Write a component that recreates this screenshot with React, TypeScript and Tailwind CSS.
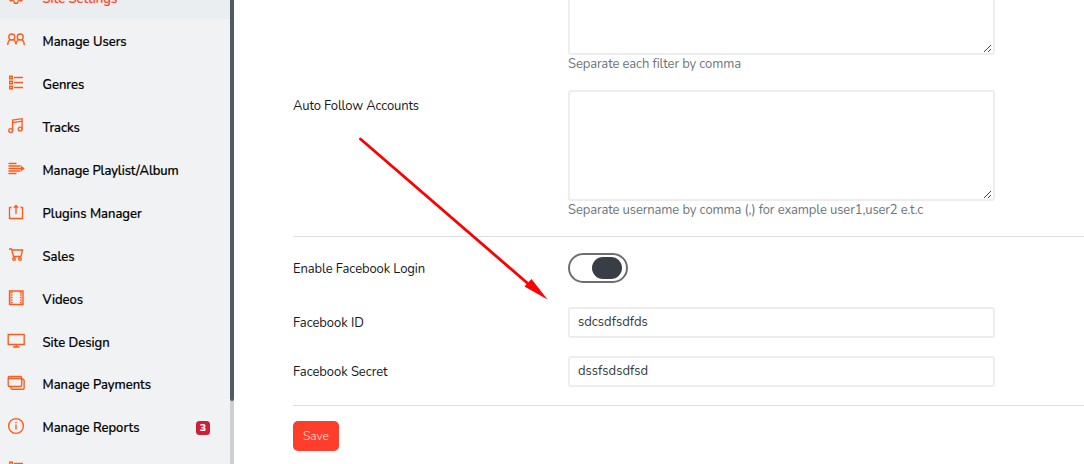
import type { ReactNode } from 'react';

type Item = { label: string; icon: ReactNode; tracking?: string; height: string; badge?: string };

const listIcon = (
  <g>
    <path d="M2.700 2.200h2.600v2.600h-2.600zM2.700 7.200h2.600v2.600h-2.600zM2.700 12.200h2.600v2.600h-2.600z" strokeWidth="1.4" />
    <path d="M7 3.500h9M7 8.500h9M7 13.500h9" strokeWidth="1.4" />
  </g>
);

const items: Item[] = [
  {
    label: 'Manage Users',
    height: 'h-[43px]',
    icon: (
      <g>
        <circle cx="4.800" cy="6" r="3" />
        <circle cx="13.200" cy="6" r="3" />
        <path d="M.7 14c0-3 1-4.400 2.600-5.500M6.500 8.500C8 9.600 9 11 9 13.500c0-2.500 1-3.900 2.500-5M14.700 8.500c1.600 1.100 2.600 2.500 2.600 5.500" />
      </g>
    ),
  },
  { label: 'Genres', height: 'h-[43px]', icon: listIcon },
  {
    label: 'Tracks',
    height: 'h-[43px]',
    icon: (
      <g>
        <circle cx="3.700" cy="13.500" r="1.900" />
        <circle cx="13.200" cy="12" r="1.900" />
        <path d="M5.600 13.500V3.200l9.500-1.500V12M5.600 5.700l9.500-1.500" />
      </g>
    ),
  },
  {
    label: 'Manage Playlist/Album',
    tracking: 'tracking-[-0.08px]',
    height: 'h-[43px]',
    icon: (
      <g>
        <path d="M1.500 3.500h8M1.500 6h12M1.500 8.500h13M1.500 11h12M1.500 13.500h8" />
        <path d="M14 5.500 17.700 8.500 14 11.500z" fill="currentColor" stroke="none" />
      </g>
    ),
  },
  {
    label: 'Plugins Manager',
    height: 'h-[43px]',
    icon: <path d="M4.500 4.500h-2v11h13v-11h-2M9 11V2.500M6.800 4.700 9 2.500l2.200 2.200" />,
  },
  {
    label: 'Sales',
    height: 'h-[43px]',
    icon: (
      <g>
        <path d="M2 3h2.500l2 7.500h7.500l1.500-6.500H5" />
        <circle cx="7" cy="13" r="1.300" />
        <circle cx="13" cy="13" r="1.300" />
      </g>
    ),
  },
  {
    label: 'Videos',
    height: 'h-[43px]',
    icon: (
      <g>
        <path d="M2.500 2h13.500v13.500h-13.500z" />
        <path d="M4 2.500v12.500M14.500 2.500v12.500" strokeWidth="2" opacity=".45" />
        <path d="M5 3v12M13.500 3v12" strokeDasharray="1 1.500" />
      </g>
    ),
  },
  {
    label: 'Site Design',
    height: 'h-[43px]',
    icon: <path d="M1.200 2.500h16v10h-16zM9.200 12.500v2.500M6 15h6.500" />,
  },
  {
    label: 'Manage Payments',
    height: 'h-[42px]',
    icon: (
      <g>
        <rect x="1.200" y="2.500" width="13.500" height="10" rx="1.500" />
        <path d="M1.200 4.500h13.500M14.700 5.200h1.200q1.200 0 1.200 1.200V14q0 1.200-1.200 1.200H5.200q-1.200 0-1.200-1.200v-1.500" />
      </g>
    ),
  },
  {
    label: 'Manage Reports',
    height: 'h-[43px]',
    badge: '3',
    icon: (
      <g>
        <circle cx="9" cy="9" r="7.400" />
        <path d="M9 7.500v5M9 5v1.300" />
      </g>
    ),
  },
  { label: '', height: 'h-[43px]', icon: listIcon },
];

function Glyph({ children }: { children: ReactNode }) {
  return (
    <svg viewBox="0 0 18 18" className="mb-[2px] h-[18px] w-[18px] shrink-0 text-[#ff5a1a]" fill="none" stroke="currentColor" strokeWidth="1.35">
      {children}
    </svg>
  );
}

function Sidebar() {
  return (
    <aside className="flex h-full w-[234px] shrink-0 bg-[#f0f2f4]">
      <nav className="flex w-[230px] flex-col overflow-hidden text-[13px] font-medium text-black [-webkit-text-stroke:0.2px_currentColor]">
        <div className="flex h-[19px] shrink-0 flex-col justify-end overflow-hidden bg-[#ebeef0]">
          <div className="flex h-[43px] shrink-0 items-center pl-[7px] text-[#ff4422]">
            <Glyph>
              <circle cx="9" cy="8.500" r="2.800" />
              <path d="M7.500 1.500h3l.5 2 1.500.8 2-.8 1.500 2.500-1.500 1.500v1.500l1.500 1.500-1.500 2.500-2-.6-1.500.8-.5 2h-3l-.5-2-1.500-.8-2 .6L2 10.500l1.500-1.500V7.500L2 6 3.500 3.500l2 .8L7 3.500z" />
            </Glyph>
            <span className="ml-[17.500px] pt-[4px]">Site Settings</span>
          </div>
        </div>
        {items.map((item, i) => (
          <div key={i} className={`flex shrink-0 items-center pl-[7px] pr-5 ${item.height}`}>
            <Glyph>{item.icon}</Glyph>
            <span className={`ml-[17.500px] whitespace-nowrap pt-[4px] ${item.tracking ?? ''}`}>{item.label}</span>
            {item.badge && (
              <span className="ml-auto mt-[3px] flex h-[14px] w-[14px] items-center justify-center rounded-[3.500px] bg-[#cf1f38] text-[10.500px] font-bold text-white">
                {item.badge}
              </span>
            )}
          </div>
        ))}
      </nav>
      <div className="w-1 bg-[#cdd0d2]">
        <div className="h-[401px] rounded-b-[2px] bg-[#4f5c60]" />
      </div>
    </aside>
  );
}

function Area() {
  return (
    <div className="flex h-[111px] w-[427px] shrink-0 items-end justify-end rounded-[3px] border-2 border-[#ededed] bg-white">
      <svg className="h-[9px] w-[9px]" viewBox="0 0 9 9" fill="#444" shapeRendering="crispEdges">
        {[0, 1, 2, 3, 4, 5, 6].map((n) => (
          <rect key={n} x={n} y={7 - n} width="1" height="1" />
        ))}
        {[4, 5, 6].map((n) => (
          <rect key={n} x={n} y={11 - n} width="1" height="1" />
        ))}
      </svg>
    </div>
  );
}

export default function App() {
  return (
    <div className="relative flex h-[464px] w-[1084px] overflow-hidden bg-white font-[Nunito,Lato,sans-serif] antialiased">
      <Sidebar />
      <main className="flex min-w-0 flex-1 flex-col pl-[59px] text-[13px] leading-[18px] text-[#151719]">
        <div className="flex h-[90px] shrink-0 flex-col justify-start pl-[275px]">
          <div className="flex h-[55px] shrink-0 flex-col justify-end overflow-hidden">
            <Area />
          </div>
          <p className="tracking-[-0.12px] text-[#6c757d]">Separate each filter by comma</p>
        </div>
        <div className="flex h-[146px] shrink-0">
          <label className="w-[275px] shrink-0 pt-[7px] tracking-[-0.15px]">Auto Follow Accounts</label>
          <div>
            <Area />
            <p className="whitespace-nowrap tracking-[-0.11px] text-[#6c757d]">Separate username by comma (,) for example user1,user2 e.t.c</p>
          </div>
        </div>
        <div className="h-px shrink-0 bg-[#dedfe0]" />
        <div className="mt-4 flex h-[30px] shrink-0 items-center">
          <label className="w-[275px] pt-[2px] tracking-[-0.1px]">Enable Facebook Login</label>
          <div className="flex h-[30px] w-[60px] items-center justify-end rounded-full border-2 border-[#6e6e6e] pr-1">
            <div className="h-[22px] w-[30px] rounded-full bg-[#393d46]" />
          </div>
        </div>
        <div className="mt-6 flex h-[31px] shrink-0 items-center">
          <label className="w-[275px] tracking-[-0.06px]">Facebook ID</label>
          <div className="flex h-[31px] w-[427px] items-center rounded-[3px] border-2 border-[#ededed] px-2 pb-px text-[#33373b]">sdcsdfsdfds</div>
        </div>
        <div className="mt-[18px] flex h-[31px] shrink-0 items-center">
          <label className="w-[275px] tracking-[-0.06px]">Facebook Secret</label>
          <div className="flex h-[31px] w-[427px] items-center rounded-[3px] border-2 border-[#ededed] px-2 pb-px text-[#33373b]">dssfsdsdfsd</div>
        </div>
        <div className="mt-[18px] h-px shrink-0 bg-[#dedfe0]" />
        <button className="mt-[15px] h-[30px] w-[46px] shrink-0 rounded-[5px] bg-[#ff3d2b] text-[12px] font-light text-[#ffe0dc]">Save</button>
      </main>
      <svg className="pointer-events-none absolute left-0 top-0 h-[464px] w-[1084px]" viewBox="0 0 1084 464">
        <path d="M360.500 139 529 284.500" stroke="#f00" strokeWidth="2.800" strokeLinecap="round" />
        <path d="M547.500 299.500 524.500 286.500 531.500 279z" fill="#f00" />
      </svg>
    </div>
  );
}
